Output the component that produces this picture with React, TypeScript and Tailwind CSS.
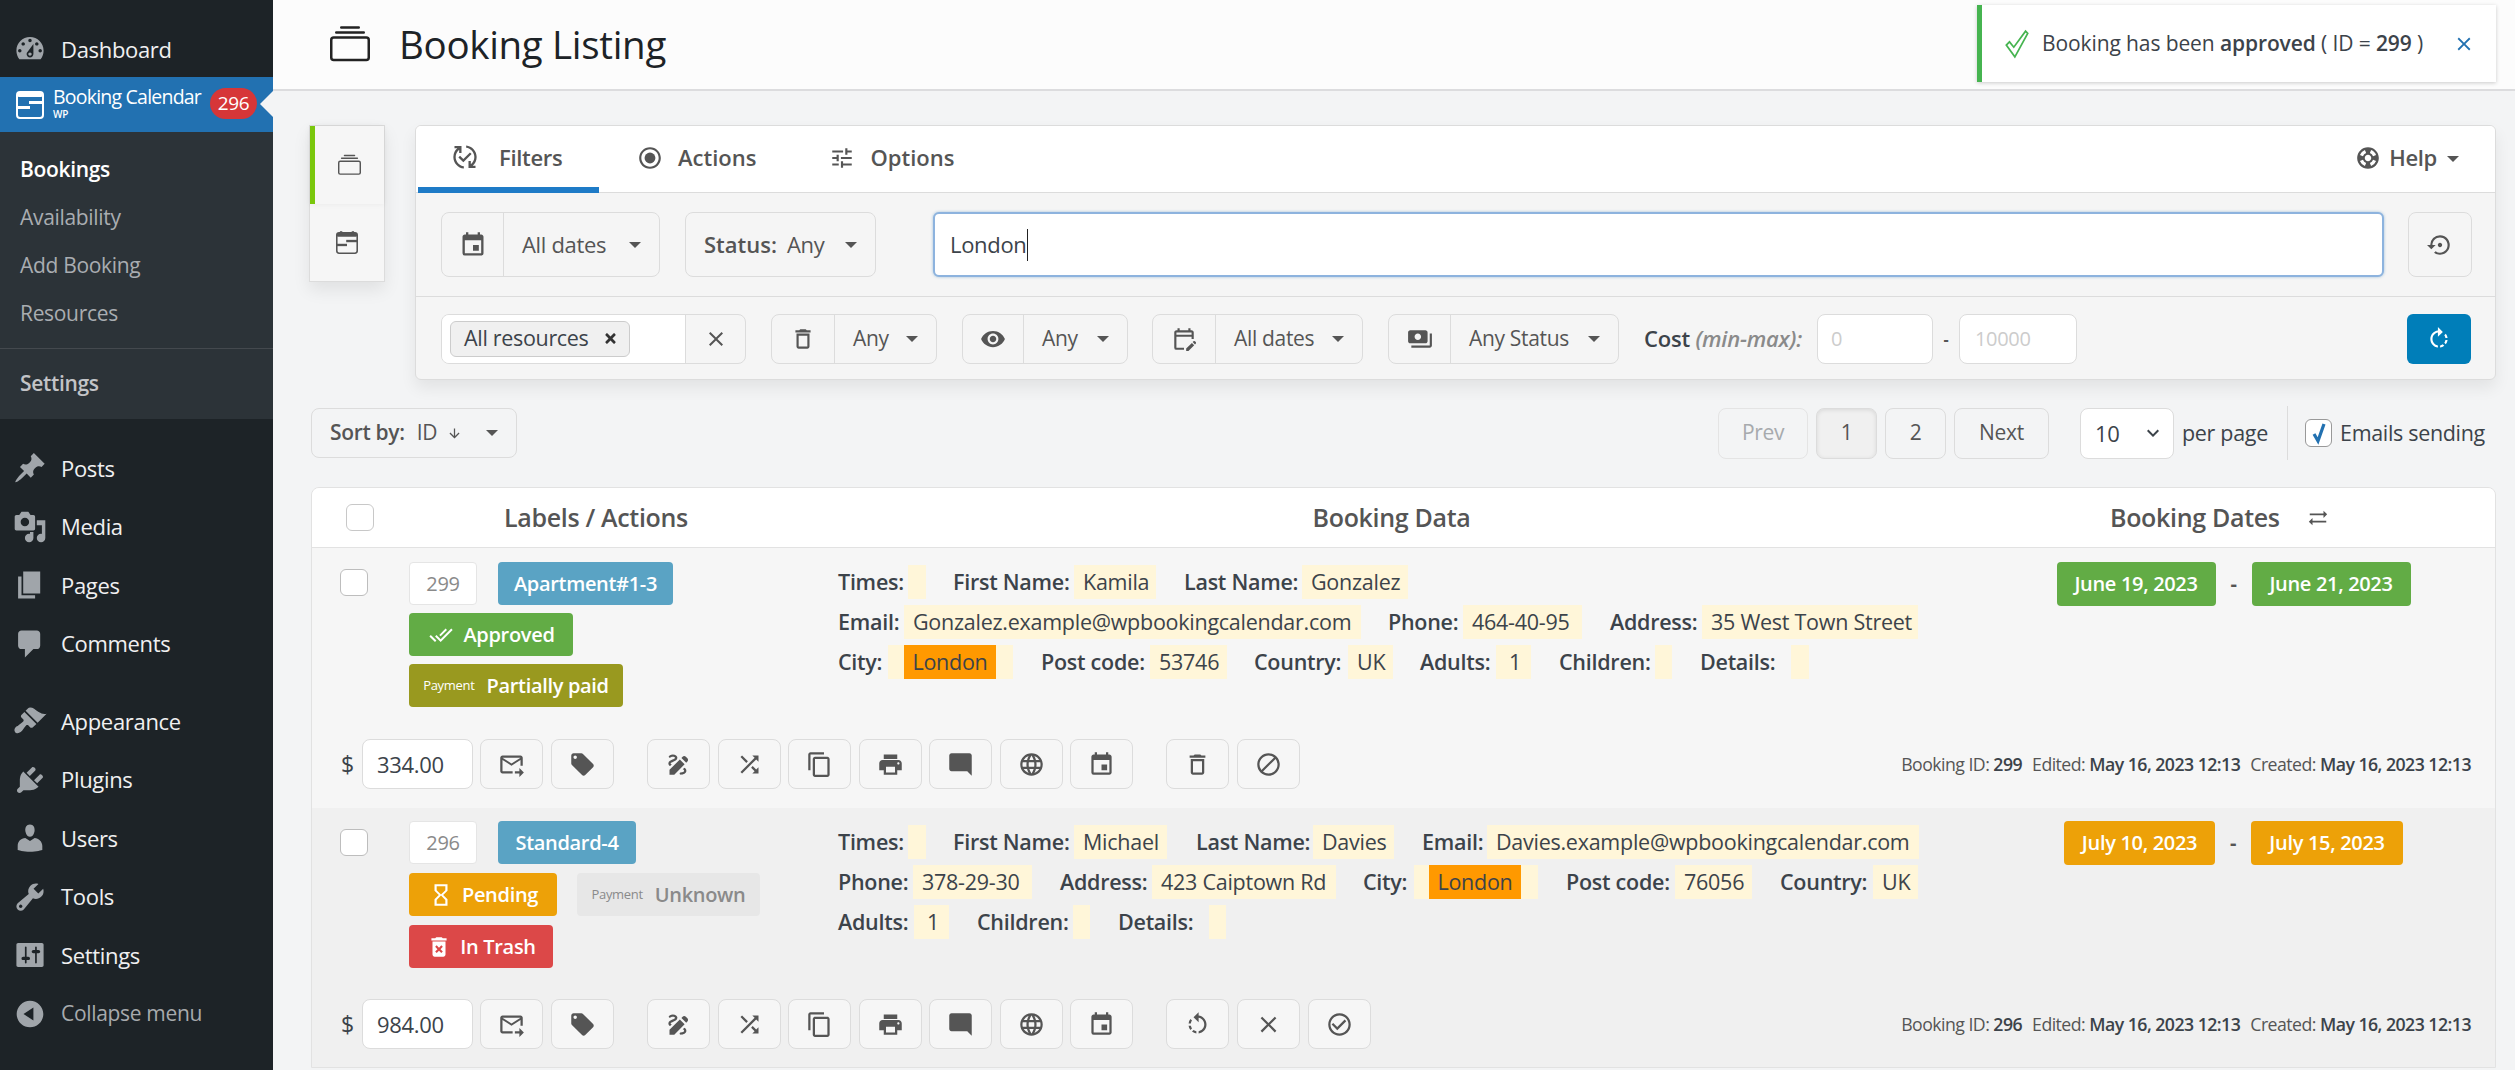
import React from "react";
import { BsCollection } from "react-icons/bs";
import { FaTimes } from "react-icons/fa";
import {
  MdOutlinePublishedWithChanges, MdOutlineRadioButtonChecked, MdOutlineTune, MdEvent, MdOutlineDelete, MdRemoveRedEye,
  MdOutlineEditCalendar, MdPayments, MdOutlineSupport, MdSettingsBackupRestore, MdOutlineRotateRight, MdOutlineForwardToInbox, MdLocalOffer,
  MdDraw, MdShuffle, MdContentCopy, MdPrint, MdModeComment, MdLanguage, MdBlock, MdClose, MdCheckCircleOutline,
  MdOutlineRotateLeft, MdHourglassEmpty, MdDoneAll, MdDeleteForever, MdSyncAlt, MdArrowDownward, MdKeyboardArrowDown,
} from "react-icons/md";

const dash: Record<string, string> = {
  dashboard: "M3.76 16h12.48c1.1-1.37 1.76-3.11 1.76-5 0-4.42-3.58-8-8-8s-8 3.58-8 8c0 1.89.66 3.63 1.76 5zM10 4c.55 0 1 .45 1 1s-.45 1-1 1-1-.45-1-1 .45-1 1-1zM6 6c.55 0 1 .45 1 1s-.45 1-1 1-1-.45-1-1 .45-1 1-1zm8 0c.55 0 1 .45 1 1s-.45 1-1 1-1-.45-1-1 .45-1 1-1zm-5.37 5.55L12 7v6c0 1.1-.9 2-2 2s-2-.9-2-2c0-.57.24-1.08.63-1.45zM4 10c.55 0 1 .45 1 1s-.45 1-1 1-1-.45-1-1 .45-1 1-1zm12 0c.55 0 1 .45 1 1s-.45 1-1 1-1-.45-1-1 .45-1 1-1zm-5 3c0-.55-.45-1-1-1s-1 .45-1 1 .45 1 1 1 1-.45 1-1z",
  post: "M10.44 3.02l1.82-1.82 6.36 6.35-1.83 1.82c-1.05-.68-2.48-.57-3.41.36l-.75.75c-.92.93-1.04 2.35-.35 3.41l-1.83 1.82-2.41-2.41-2.8 2.79c-.42.42-3.38 2.71-3.8 2.29s1.86-3.39 2.28-3.81l2.79-2.79L4.1 9.36l1.83-1.82c1.05.69 2.48.57 3.4-.36l.75-.75c.93-.92 1.05-2.35.36-3.41z",
  media: "M13 11V4c0-.55-.45-1-1-1h-1.67L9 1H5L3.67 3H2c-.55 0-1 .45-1 1v7c0 .55.45 1 1 1h10c.55 0 1-.45 1-1zM7 4.5c1.38 0 2.5 1.12 2.5 2.5S8.38 9.5 7 9.5 4.5 8.38 4.5 7 5.62 4.5 7 4.5zM14 6h5v10.5c0 1.38-1.12 2.5-2.5 2.5S14 17.88 14 16.5s1.12-2.5 2.5-2.5c.17 0 .34.02.5.05V9h-3V6zm-4 8.05V13h2v3.5c0 1.38-1.12 2.5-2.5 2.5S7 17.88 7 16.5 8.12 14 9.5 14c.17 0 .34.02.5.05z",
  page: "M6 15V2h10v13H6zm-1 1h8v2H3V5h2v11z",
  comments: "M5 2h9c1.1 0 2 .9 2 2v7c0 1.1-.9 2-2 2h-2l-5 5v-5H5c-1.1 0-2-.9-2-2V4c0-1.1.9-2 2-2z",
  appearance: "M14.48 11.06L7.41 3.99l1.5-1.5c.5-.56 2.3-.47 3.51.32 1.21.8 1.43 1.28 2.91 2.1 1.18.64 2.45 1.26 4.45.85zm-.71.71L6.7 4.7 4.93 6.47c-.39.39-.39 1.02 0 1.41l1.06 1.06c.39.39.39 1.03 0 1.42-.6.6-1.43 1.11-2.21 1.69-.35.26-.7.53-1.01.84C1.43 13.23.28 14.96 1.2 16.4s2.63.83 3.95-.49c.3-.31.58-.66.84-1.01.58-.78 1.09-1.61 1.69-2.21.39-.39 1.02-.39 1.41 0l1.06 1.06c.39.39 1.02.39 1.41 0z",
  plugins: "M13.11 4.36L9.87 7.6 8 5.73l3.24-3.24c.35-.34 1.05-.2 1.56.32.52.51.66 1.21.31 1.55zm-8 1.77l.91-1.12 9.01 9.01-1.19.84c-.71.71-2.63 1.16-3.82 1.16H6.14L4.9 17.26c-.59.59-1.54.59-2.12 0-.59-.58-.59-1.53 0-2.12l1.24-1.24v-3.88c0-1.13.4-3.19 1.09-3.89zm7.26 3.97l3.24-3.24c.34-.35 1.04-.21 1.55.31.52.51.66 1.21.31 1.55l-3.24 3.25z",
  users: "M10 9.25c-2.27 0-2.73-3.44-2.73-3.44C7 4.02 7.82 2 9.97 2c2.16 0 2.98 2.02 2.71 3.81 0 0-.41 3.44-2.68 3.44zm0 2.57L12.72 10c2.39 0 4.52 2.33 4.52 4.53v2.49s-3.65 1.13-7.24 1.13c-3.65 0-7.24-1.13-7.24-1.13v-2.49c0-2.25 1.94-4.48 4.47-4.48z",
  tools: "M16.68 9.77c-1.34 1.34-3.3 1.67-4.95.99l-5.41 6.52c-.99.99-2.59.99-3.58 0s-.99-2.59 0-3.57l6.52-5.42c-.68-1.65-.35-3.61.99-4.95 1.28-1.28 3.12-1.62 4.72-1.06l-2.89 2.89 2.82 2.82 2.86-2.87c.53 1.58.18 3.39-1.08 4.65zM3.81 16.21c.4.39 1.04.39 1.43 0 .4-.4.4-1.04 0-1.43-.39-.4-1.03-.4-1.43 0-.39.39-.39 1.03 0 1.43z",
  settings: "M18 16V4c0-.55-.45-1-1-1H3c-.55 0-1 .45-1 1v12c0 .55.45 1 1 1h14c.55 0 1-.45 1-1zM8 11h1c.55 0 1 .45 1 1s-.45 1-1 1H8v1.5c0 .28-.22.5-.5.5s-.5-.22-.5-.5V13H6c-.55 0-1-.45-1-1s.45-1 1-1h1V5.5c0-.28.22-.5.5-.5s.5.22.5.5V11zm5-2h-1c-.55 0-1-.45-1-1s.45-1 1-1h1V5.5c0-.28.22-.5.5-.5s.5.22.5.5V7h1c.55 0 1 .45 1 1s-.45 1-1 1h-1v5.5c0 .28-.22.5-.5.5s-.5-.22-.5-.5V9z",
  collapse: "M10 2.16c4.33 0 7.84 3.51 7.84 7.84s-3.51 7.84-7.84 7.84S2.16 14.33 2.16 10 5.71 2.16 10 2.16zm2 11.72V6.12L6.18 9.97z",
};

function Dash({ n }: { n: string }) {
  return (
    <svg viewBox="0 0 20 20" className="w-[34px] h-[34px] ml-[13px] shrink-0 fill-[#a0a5aa]">
      <path d={dash[n]} />
    </svg>
  );
}

function MenuItem({ n, t, c }: { n: string; t: string; c?: string }) {
  return (
    <div className={"flex items-center h-[58.5px] " + (c || "")}>
      <Dash n={n} />
      <span className="ml-[14px] text-[22px] text-[#f0f0f1]">{t}</span>
    </div>
  );
}

function Logo({ c, pegs }: { c: string; pegs?: boolean }) {
  return (
    <svg viewBox="0 0 28 30" className={c}>
      <rect x="1" y="2" width="26" height="26" rx="3" fill="none" stroke="currentColor" strokeWidth="2" />
      <rect x="1" y="2" width="26" height="5" rx="2" fill="currentColor" />
      <rect x="13" y="11" width="14" height="3" fill="currentColor" />
      <rect x="1" y="16" width="13" height="3" fill="currentColor" />
      {pegs ? <rect x="5" y="0" width="3" height="4" fill="currentColor" /> : null}
      {pegs ? <rect x="20" y="0" width="3" height="4" fill="currentColor" /> : null}
    </svg>
  );
}

function Sidebar() {
  return (
    <div className="w-[273px] shrink-0 h-[1070px] bg-[#1d2327] relative">
      <div className="h-[77px] pt-[21px] flex items-center">
        <Dash n="dashboard" />
        <span className="ml-[14px] text-[22px] text-[#f0f0f1]">Dashboard</span>
      </div>
      <div className="h-[55px] bg-[#2271b1] flex items-center relative text-white">
        <Logo c="w-[28px] h-[30px] ml-[16px] text-white shrink-0" />
        <div className="ml-[9px] flex flex-col leading-none">
          <span className="text-[19.5px] tracking-[-0.04em] leading-[24px] mt-[-6px]">Booking Calendar</span>
          <span className="text-[10px] font-semibold leading-[10px]">WP</span>
        </div>
        <span className="absolute left-[210px] top-[11px] w-[47px] h-[31px] rounded-full bg-[#d63638] text-white text-[19px] flex items-center justify-center">296</span>
        <span className="absolute right-0 top-[14px] w-0 h-0 border-y-[13px] border-y-transparent border-r-[13px] border-r-[#f3f4f5]" />
      </div>
      <div className="h-[287px] bg-[#2c3338] pt-[14px]">
        <div className="h-[48px] flex items-center pl-[20px] text-[21px] font-semibold text-white">Bookings</div>
        <div className="h-[48px] flex items-center pl-[20px] text-[21px] text-[#a9adb1]">Availability</div>
        <div className="h-[48px] flex items-center pl-[20px] text-[21px] text-[#a9adb1]">Add Booking</div>
        <div className="h-[48px] flex items-center pl-[20px] text-[21px] text-[#a9adb1]">Resources</div>
        <div className="mt-[10px] border-t border-[#44494e] h-[70px] flex items-center pl-[20px] text-[21px] font-semibold text-[#c3c4c7]">Settings</div>
      </div>
      <div className="pt-[20px]">
        <MenuItem n="post" t="Posts" />
        <MenuItem n="media" t="Media" />
        <MenuItem n="page" t="Pages" />
        <MenuItem n="comments" t="Comments" />
        <MenuItem n="appearance" t="Appearance" c="mt-[19px]" />
        <MenuItem n="plugins" t="Plugins" />
        <MenuItem n="users" t="Users" />
        <MenuItem n="tools" t="Tools" />
        <MenuItem n="settings" t="Settings" />
        <div className="flex items-center h-[58.5px]">
          <Dash n="collapse" />
          <span className="ml-[14px] text-[21px] text-[#a7aaad]">Collapse menu</span>
        </div>
      </div>
    </div>
  );
}

function Caret({ c }: { c?: string }) {
  return <span className={"block w-0 h-0 border-x-[6px] border-t-[6px] border-x-transparent border-t-[#555] shrink-0 " + (c || "")} />;
}

function Group({ icon, text, w, iw, big }: { icon: React.ReactNode; text: string; w: string; iw: string; big?: boolean }) {
  return (
    <div className={"flex border border-[#dcdcdc] rounded-lg " + w + (big ? " h-[65px]" : " h-[50px]")}>
      <div className={"flex items-center justify-center border-r border-[#dcdcdc] text-[#555] " + iw}>{icon}</div>
      <div className={"flex-1 flex items-center justify-between pl-[18px] pr-[18px] text-[#555] " + (big ? "text-[22px]" : "text-[21px]")}>
        <span>{text}</span>
        <Caret />
      </div>
    </div>
  );
}

function Tab({ icon, t, c }: { icon: React.ReactNode; t: string; c: string }) {
  return (
    <div className={"flex items-center text-[22px] font-semibold text-[#555] " + c}>
      {icon}
      <span>{t}</span>
    </div>
  );
}

function FilterCard() {
  return (
    <div className="w-[2081px] h-[255px] border border-[#dcdcdc] rounded-md bg-[#f5f5f5] shadow-[0_8px_16px_rgba(0,0,0,0.07)] overflow-hidden">
      <div className="h-[67px] bg-white border-b border-[#dcdcdc] flex items-center relative">
        <div className="w-[181px] ml-[2px] border-b-[6px] border-[#1e7bc7] h-[67px] flex items-center pl-[33px] pt-[2px]">
          <Tab icon={<MdOutlinePublishedWithChanges size={28} className="mr-[20px]" />} t="Filters" c="" />
        </div>
        <Tab icon={<MdOutlineRadioButtonChecked size={26} className="mr-[15px]" />} t="Actions" c="ml-[38px] pb-[3px] tracking-[0em]" />
        <Tab icon={<MdOutlineTune size={26} className="mr-[15px]" />} t="Options" c="ml-[73px] pb-[3px] tracking-[0em]" />
        <Tab icon={<MdOutlineSupport size={26} className="mr-[8px]" />} t="Help" c="ml-auto pb-[3px]" />
        <Caret c="ml-[10px] mr-[36px]" />
      </div>
      <div className="h-[104px] border-b border-[#dcdcdc] flex items-center pl-[25px]">
        <Group icon={<MdEvent size={28} />} text="All dates" w="w-[219px]" iw="w-[62px]" big />
        <div className="ml-[25px] w-[191px] h-[65px] border border-[#dcdcdc] rounded-lg flex items-center justify-between pl-[18px] pr-[18px] text-[22px] text-[#555]">
          <span><b className="font-semibold mr-[10px] tracking-[0em]">Status:</b>Any</span>
          <Caret />
        </div>
        <div className="ml-[57px] w-[1451px] h-[65px] rounded-md border-2 border-[#8db3de] bg-white flex items-center pl-[15px] text-[22px] text-[#3c434a] shadow-[0_0_3px_rgba(34,113,177,0.4)]">
          London<span className="w-px h-[32px] bg-[#222] ml-px" />
        </div>
        <div className="ml-[24px] w-[64px] h-[65px] border border-[#dcdcdc] rounded-lg flex items-center justify-center text-[#555]">
          <MdSettingsBackupRestore size={26} />
        </div>
      </div>
      <div className="h-[83px] flex items-center pl-[25px]">
        <div className="flex w-[305px] h-[50px] border border-[#dcdcdc] rounded-lg overflow-hidden">
          <div className="w-[244px] bg-white flex items-center pl-[8px] border-r border-[#dcdcdc]">
            <span className="h-[36px] w-[180px] bg-[#f0f0f0] border border-[#ccc] rounded-md flex items-center justify-between pl-[13px] pr-[11px] text-[21.5px] text-[#3c434a]">
              All resources <FaTimes size={15} className="text-[#333]" />
            </span>
          </div>
          <div className="flex-1 flex items-center justify-center text-[#555]"><MdClose size={24} /></div>
        </div>
        <div className="ml-[25px]"><Group icon={<MdOutlineDelete size={26} />} text="Any" w="w-[166px]" iw="w-[63px]" /></div>
        <div className="ml-[25px]"><Group icon={<MdRemoveRedEye size={26} />} text="Any" w="w-[166px]" iw="w-[61px]" /></div>
        <div className="ml-[24px]"><Group icon={<MdOutlineEditCalendar size={26} />} text="All dates" w="w-[211px]" iw="w-[63px]" /></div>
        <div className="ml-[25px]"><Group icon={<MdPayments size={26} />} text="Any Status" w="w-[231px]" iw="w-[62px]" /></div>
        <span className="ml-[25px] text-[22px] tracking-[-0.01em] font-semibold text-[#3c434a] whitespace-nowrap w-[165px]">Cost <i className="font-semibold text-[#8a8a8a]">(min-max):</i></span>
        <div className="ml-[8px] w-[116px] h-[50px] border border-[#dcdcdc] rounded-lg bg-white flex items-center pl-[13px] text-[20px] text-[#ccc]">0</div>
        <span className="w-[26px] text-center font-bold text-[#555]">-</span>
        <div className="w-[118px] h-[50px] border border-[#dcdcdc] rounded-lg bg-white flex items-center pl-[15px] text-[20px] text-[#ccc]">10000</div>
        <div className="ml-[330px] w-[64px] h-[50px] rounded-md bg-[#007eb9] flex items-center justify-center text-white">
          <MdOutlineRotateRight size={26} />
        </div>
      </div>
    </div>
  );
}

function Pg({ t, c }: { t: string; c: string }) {
  return <div className={"h-[51px] border border-[#dcdcdc] rounded-lg flex items-center justify-center text-[21px] " + c}>{t}</div>;
}

function Toolbar() {
  return (
    <div className="mt-[26px] ml-[38px] w-[2185px] flex items-start h-[52px]">
      <div className="mt-[2px] w-[206px] h-[50px] border border-[#dcdcdc] rounded-lg flex items-center pl-[18px] pr-[18px] text-[21px] text-[#555]">
        <b className="font-semibold">Sort by:</b><span className="ml-[12px]">ID</span>
        <MdArrowDownward size={15} className="ml-[10px]" />
        <Caret c="ml-auto" />
      </div>
      <div className="ml-auto flex items-center gap-[8px]">
        <Pg t="Prev" c="w-[90px] text-[#a7aaad] border-[#e4e4e4]" />
        <Pg t="1" c="w-[61px] text-[#555] bg-[#f0f0f0] shadow-[inset_0_1px_4px_rgba(0,0,0,0.1)]" />
        <Pg t="2" c="w-[61px] text-[#555]" />
        <Pg t="Next" c="w-[95px] text-[#555]" />
        <div className="ml-[23px] w-[94px] h-[51px] border border-[#dcdcdc] rounded-lg bg-white flex items-center justify-between pl-[14px] pr-[8px] text-[22px] text-[#3c434a]">
          10<MdKeyboardArrowDown size={24} />
        </div>
        <span className="text-[21.5px] text-[#3c434a] whitespace-nowrap w-[97px]">per page</span>
        <span className="w-px h-[54px] bg-[#dcdcdc]" />
        <span className="ml-[9px] w-[27px] h-[28px] border border-[#999] rounded-md bg-white flex items-center justify-center">
          <svg viewBox="0 0 20 24" className="w-[20px] h-[24px] fill-none stroke-[#2271b1] stroke-[3.2px]"><path d="M5 13l4 7 6-17" /></svg>
        </span>
        <span className="text-[21.5px] text-[#3c434a] whitespace-nowrap w-[146px]">Emails sending</span>
        <span className="w-[2px]" />
      </div>
    </div>
  );
}

function Box({ c }: { c: string }) {
  return <span className={"block w-[28px] h-[27px] bg-white border border-[#bdbdbd] rounded-md " + c} />;
}

function Label({ c, children }: { c: string; children: React.ReactNode }) {
  return <span className={"h-[43px] rounded-[4px] flex items-center justify-center text-white text-[20px] font-semibold whitespace-nowrap " + c}>{children}</span>;
}

function F({ l, lc, v, vc, hi, hc }: { l: string; lc: string; v?: string; vc: string; hi?: boolean; hc?: string }) {
  return (
    <>
      <span className={"font-semibold whitespace-nowrap shrink-0 " + lc}>{l}</span>
      <span className={"h-[34px] bg-[#fff6d9] flex items-center shrink-0 font-normal whitespace-nowrap " + vc + (hi ? "" : " pl-[9px]")}>
        {hi ? <span className={"h-[34px] w-[92px] bg-[#ff9900] flex items-center justify-center " + (hc || "")}>{v}</span> : v}
      </span>
    </>
  );
}

function ActBtn({ children }: { children: React.ReactNode }) {
  return <div className="w-[63px] h-[50px] border border-[#dcdcdc] rounded-lg flex items-center justify-center text-[#555] bg-[#f6f6f6]">{children}</div>;
}

function Actions({ amount, id, last }: { amount: string; id: string; last: React.ReactNode }) {
  return (
    <div className="h-[50px] flex items-center pl-[29px]">
      <span className="w-[21px] text-[23px] text-[#3c434a]">$</span>
      <div className="w-[111px] h-[50px] bg-white border border-[#dcdcdc] rounded-lg flex items-center pl-[14px] text-[22px] text-[#3c434a]">{amount}</div>
      <div className="ml-[7px] flex gap-[8px]">
        <ActBtn><MdOutlineForwardToInbox size={27} /></ActBtn>
        <ActBtn><MdLocalOffer size={27} /></ActBtn>
      </div>
      <div className="ml-[33px] flex gap-[7.5px]">
        <ActBtn><MdDraw size={27} /></ActBtn>
        <ActBtn><MdShuffle size={27} /></ActBtn>
        <ActBtn><MdContentCopy size={27} /></ActBtn>
        <ActBtn><MdPrint size={27} /></ActBtn>
        <ActBtn><MdModeComment size={27} /></ActBtn>
        <ActBtn><MdLanguage size={27} /></ActBtn>
        <ActBtn><MdEvent size={27} /></ActBtn>
      </div>
      <div className="ml-[33px] flex gap-[8px]">{last}</div>
      <div className="ml-auto mr-[24px] text-[17.7px] tracking-[-0.03em] text-[#555] whitespace-nowrap">
        Booking ID: <b className="font-semibold text-[#3c434a]">{id}</b>
        <span className="ml-[10px]">Edited: </span><b className="font-semibold text-[#3c434a]">May 16, 2023 12:13</b>
        <span className="ml-[10px]">Created: </span><b className="font-semibold text-[#3c434a]">May 16, 2023 12:13</b>
      </div>
    </div>
  );
}

function DateChip({ t, c }: { t: string; c: string }) {
  return <span className={"h-[44px] rounded-[4px] text-white font-semibold text-[20px] flex items-center justify-center whitespace-nowrap " + c}>{t}</span>;
}

function Row1() {
  return (
    <div className="h-[260px] bg-[#f6f6f6]">
      <div className="h-[191px] flex pl-[28px] pt-[14px]">
        <div className="w-[69px] pt-[7px]"><Box c="" /></div>
        <div className="w-[429px] flex flex-col gap-[8px]">
          <div className="flex gap-[21px]">
            <span className="w-[68px] h-[43px] bg-white border border-[#e5e5e5] rounded-[4px] flex items-center justify-center text-[20px] text-[#8a8a8a]">299</span>
            <Label c="w-[175px] bg-[#5aa3c4]">Apartment#1-3</Label>
          </div>
          <Label c="w-[164px] bg-[#62ac45] pl-[2px]"><MdDoneAll size={24} className="mr-[10px]" />Approved</Label>
          <Label c="w-[214px] bg-[#99991f]"><span className="text-[13px] font-normal mr-[12px]">Payment</span>Partially paid</Label>
        </div>
        <div className="w-[1134px] pt-[3px] flex flex-col gap-[6px] text-[21.5px] text-[#3c434a] tracking-[-0.012em]">
          <div className="flex items-center">
            <F l="Times:" lc="w-[64px]" vc="ml-[6px] w-[18px]" />
            <F l="First Name:" lc="ml-[27px] w-[114px]" v="Kamila" vc="ml-[7px] w-[82px]" />
            <F l="Last Name:" lc="ml-[28px] w-[110px]" v="Gonzalez" vc="ml-[8px] w-[106px]" />
          </div>
          <div className="flex items-center">
            <F l="Email:" lc="w-[59px]" v="Gonzalez.example@wpbookingcalendar.com" vc="ml-[7px] w-[457px]" />
            <F l="Phone:" lc="ml-[27px] w-[69px]" v="464-40-95" vc="ml-[6px] w-[119px]" />
            <F l="Address:" lc="ml-[28px] w-[84px]" v="35 West Town Street" vc="ml-[8px] w-[216px]" />
          </div>
          <div className="flex items-center">
            <F l="City:" lc="w-[43px]" v="London" hi hc="ml-[16px]" vc="ml-[7px] w-[125px]" />
            <F l="Post code:" lc="ml-[28px] w-[101px]" v="53746" vc="ml-[8px] w-[77px]" />
            <F l="Country:" lc="ml-[27px] w-[86px]" v="UK" vc="ml-[8px] w-[45px]" />
            <F l="Adults:" lc="ml-[27px] w-[69px]" v="1" vc="ml-[7px] w-[35px] pl-[13px]" />
            <F l="Children:" lc="ml-[28px] w-[88px]" vc="ml-[8px] w-[17px]" />
            <F l="Details:" lc="ml-[28px] w-[72px]" vc="ml-[19px] w-[18px]" />
          </div>
        </div>
        <div className="flex-1 flex justify-center items-start">
          <DateChip t="June 19, 2023" c="w-[159px] bg-[#62ac45]" />
          <span className="w-[36px] h-[44px] flex items-center justify-center font-bold text-[20px] text-[#555]">-</span>
          <DateChip t="June 21, 2023" c="w-[159px] bg-[#62ac45]" />
        </div>
      </div>
      <Actions amount="334.00" id="299" last={<>
        <ActBtn><MdOutlineDelete size={27} /></ActBtn>
        <ActBtn><MdBlock size={27} /></ActBtn>
      </>} />
    </div>
  );
}

function Row2() {
  return (
    <div className="h-[259px] bg-[#f0f0f0]">
      <div className="h-[191px] flex pl-[28px] pt-[13px]">
        <div className="w-[69px] pt-[8px]"><Box c="" /></div>
        <div className="w-[429px] flex flex-col gap-[9px]">
          <div className="flex gap-[21px]">
            <span className="w-[68px] h-[43px] bg-white border border-[#e5e5e5] rounded-[4px] flex items-center justify-center text-[20px] text-[#8a8a8a]">296</span>
            <Label c="w-[138px] bg-[#5aa3c4]">Standard-4</Label>
          </div>
          <div className="flex gap-[20px]">
            <Label c="w-[148px] bg-[#eda108]"><MdHourglassEmpty size={26} className="mr-[8px]" />Pending</Label>
            <span className="w-[183px] h-[43px] rounded-[4px] bg-[#e7e7e7] flex items-center justify-center text-[20px] font-semibold text-[#8a8a8a] whitespace-nowrap"><span className="text-[13px] font-normal mr-[12px]">Payment</span>Unknown</span>
          </div>
          <Label c="w-[144px] bg-[#dc4848]"><MdDeleteForever size={26} className="mr-[8px]" />In Trash</Label>
        </div>
        <div className="w-[1134px] pt-[4px] flex flex-col gap-[6px] text-[21.5px] text-[#3c434a] tracking-[-0.012em]">
          <div className="flex items-center">
            <F l="Times:" lc="w-[64px]" vc="ml-[6px] w-[18px]" />
            <F l="First Name:" lc="ml-[27px] w-[114px]" v="Michael" vc="ml-[7px] w-[93px]" />
            <F l="Last Name:" lc="ml-[29px] w-[109px]" v="Davies" vc="ml-[8px] w-[81px]" />
            <F l="Email:" lc="ml-[28px] w-[58px]" v="Davies.example@wpbookingcalendar.com" vc="ml-[7px] w-[432px]" />
          </div>
          <div className="flex items-center">
            <F l="Phone:" lc="w-[68px]" v="378-29-30" vc="ml-[7px] w-[119px]" />
            <F l="Address:" lc="ml-[28px] w-[85px]" v="423 Caiptown Rd" vc="ml-[7px] w-[184px]" />
            <F l="City:" lc="ml-[27px] w-[44px]" v="London" hi hc="ml-[15px]" vc="ml-[7px] w-[124px]" />
            <F l="Post code:" lc="ml-[28px] w-[102px]" v="76056" vc="ml-[7px] w-[77px]" />
            <F l="Country:" lc="ml-[28px] w-[85px]" v="UK" vc="ml-[8px] w-[45px]" />
          </div>
          <div className="flex items-center">
            <F l="Adults:" lc="w-[69px]" v="1" vc="ml-[7px] w-[35px] pl-[13px]" />
            <F l="Children:" lc="ml-[28px] w-[89px]" vc="ml-[7px] w-[17px]" />
            <F l="Details:" lc="ml-[28px] w-[72px]" vc="ml-[19px] w-[17px]" />
          </div>
        </div>
        <div className="flex-1 flex justify-center items-start">
          <DateChip t="July 10, 2023" c="w-[151px] bg-[#eda108]" />
          <span className="w-[36px] h-[44px] flex items-center justify-center font-bold text-[20px] text-[#555]">-</span>
          <DateChip t="July 15, 2023" c="w-[152px] bg-[#eda108]" />
        </div>
      </div>
      <Actions amount="984.00" id="296" last={<>
        <ActBtn><MdOutlineRotateLeft size={27} /></ActBtn>
        <ActBtn><MdClose size={27} /></ActBtn>
        <ActBtn><MdCheckCircleOutline size={27} /></ActBtn>
      </>} />
    </div>
  );
}

function Table() {
  return (
    <div className="mt-[29px] ml-[38px] w-[2185px] border border-[#e2e2e2] rounded-t-lg bg-[#f6f6f6] overflow-hidden">
      <div className="h-[60px] bg-white border-b border-[#e2e2e2] flex items-center text-[25px] font-semibold text-[#555]">
        <Box c="ml-[34px] border-[#c8c8c8]" />
        <span className="ml-[130px] w-[184px] whitespace-nowrap">Labels / Actions</span>
        <span className="ml-[624px] w-[159px] text-center whitespace-nowrap">Booking Data</span>
        <span className="ml-[639px] w-[168px] whitespace-nowrap">Booking Dates</span>
        <MdSyncAlt size={22} className="ml-[29px]" />
      </div>
      <Row1 />
      <Row2 />
    </div>
  );
}

export default function App() {
  return (
    <div className="w-[2515px] h-[1070px] overflow-hidden flex bg-[#f3f4f5] font-['Open_Sans','Noto_Sans',sans-serif] tracking-[-0.02em]">
      <Sidebar />
      <div className="flex-1 relative">
        <div className="h-[91px] bg-[#fcfcfc] border-b-2 border-[#dcdcde] flex items-center">
          <BsCollection size={40} className="ml-[57px] text-[#222]" />
          <h1 className="ml-[29px] text-[38.5px] text-[#1d2327] font-normal">Booking Listing</h1>
        </div>
        <div className="absolute right-[19px] top-[5px] w-[519px] h-[77px] bg-white border-l-[5px] border-[#46b450] shadow-[0_1px_4px_rgba(0,0,0,0.2)] flex items-center pl-[22px] text-[21px] tracking-[-0.005em] text-[#3c434a] whitespace-nowrap">
          <svg viewBox="0 0 24 28" className="w-[26px] h-[30px] shrink-0 fill-none stroke-[#46b450] stroke-[1.6px]"><path d="M2 15l3-3 4 5L20 2l2 2L10 26z" /></svg>
          <span className="ml-[12px]">Booking has been <b className="font-semibold">approved</b> ( ID = <b className="font-semibold">299</b> )</span>
          <MdClose size={22} className="absolute right-[21px] text-[#2271b1]" />
        </div>
        <div className="mt-[34px] flex items-start">
          <div className="ml-[36px] w-[76px] h-[157px] border border-[#dcdcdc] bg-[#f6f6f6] shadow-[0_8px_16px_rgba(0,0,0,0.08)]">
            <div className="h-[78px] border-l-[5px] border-[#7ac70c] flex items-center justify-center text-[#555] shadow-[0_0_6px_rgba(0,0,0,0.06)]">
              <BsCollection size={23} />
            </div>
            <div className="h-[77px] flex items-center justify-center text-[#555]">
              <Logo pegs c="w-[22px] h-[24px]" />
            </div>
          </div>
          <div className="ml-[30px]"><FilterCard /></div>
        </div>
        <Toolbar />
        <Table />
      </div>
    </div>
  );
}
